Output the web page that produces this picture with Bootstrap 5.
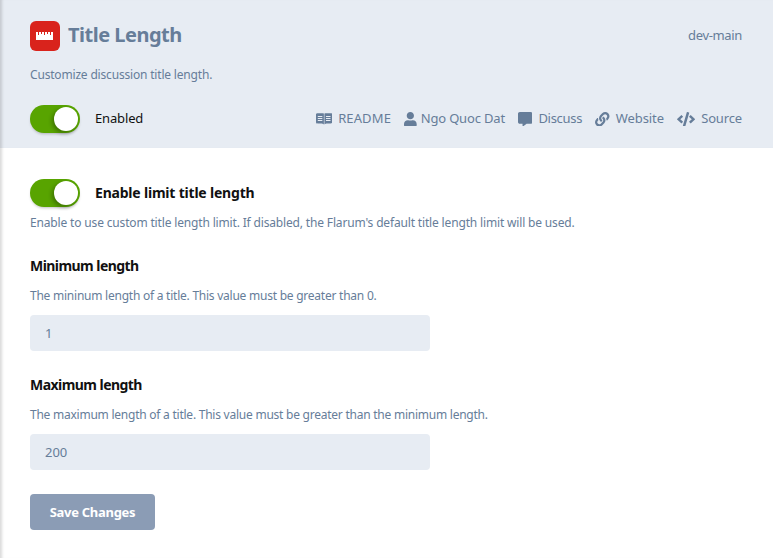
<!DOCTYPE html>
<html lang="en">
<head>
    <meta charset="UTF-8">
    <title>Title Length</title>
    <link href="https://cdn.jsdelivr.net/npm/bootstrap@5.3.0/dist/css/bootstrap.min.css" rel="stylesheet">
    <style>
        body {
            font-family: "Noto Sans", "Open Sans", sans-serif;
            font-size: 13px;
            color: #111;
            background: #fff;
            box-shadow: inset 4px 0 3px -2px rgba(0, 0, 0, .15);
            min-height: 558px;
        }
        .ext-head {
            background: #e7ecf3;
            height: 148px;
            padding: 21px 31px 0 30px;
            box-shadow: inset 4px 0 3px -2px rgba(0, 0, 0, .15);
        }
        .ext-icon {
            width: 30px;
            height: 30px;
            border-radius: 6px;
            background: #d9231c;
        }
        .ext-title {
            font-size: 20px;
            font-weight: 700;
            color: #667d99;
            margin: 0 0 0 8px;
            line-height: 28px;
            padding-bottom: 2px;
            letter-spacing: -.5px;
        }
        .ext-version { font-size: 13px; color: #667d99; letter-spacing: -.35px; }
        .ext-desc { font-size: 12px; color: #667d99; margin: 16px 0 0; line-height: 16px; letter-spacing: -.18px; }
        .muted-help { font-size: 12px; color: #667d99; line-height: 16px; margin: 0; letter-spacing: -.16px; }
        .muted-help.tight-help { letter-spacing: -.24px; }
        .toggle-sw {
            width: 50px;
            height: 28px;
            border-radius: 14px;
            background: #58a400;
            padding: 2px;
            box-shadow: 0 2px 3px -1px rgba(0, 0, 0, .25);
            flex: none;
        }
        .toggle-knob {
            width: 24px;
            height: 24px;
            border-radius: 50%;
            background: #fff;
            margin-left: auto;
            box-shadow: -2px 2px 4px rgba(0, 0, 0, .3);
        }
        .enabled-lbl { margin-left: 15px; letter-spacing: -.15px; }
        .ext-links { gap: 13px; color: #667d99; font-size: 13px; }
        .ext-links svg { fill: #667d99; height: 14.5px; display: block; margin-right: 6px; }
        .ext-links span { display: flex; align-items: center; }
        .ext-links .lnk-readme { letter-spacing: .12px; }
        .ext-links .lnk-author { letter-spacing: -.17px; }
        .ext-links .lnk-discuss { letter-spacing: -.3px; }
        .ext-links .lnk-site { letter-spacing: -.05px; }
        .ext-links .lnk-src { letter-spacing: -.15px; }
        .set-body { padding: 31px 31px 0 30px; }
        .set-label { font-size: 14px; font-weight: 700; color: #111; line-height: 20px; margin: 0; letter-spacing: -.55px; }
        .set-label.wide-lbl { margin-left: 15px; letter-spacing: -.2px; }
        .num-input.form-control {
            width: 400px;
            height: 36px;
            background: #e7ecf3;
            border: 0;
            border-radius: 4px;
            font-size: 13px;
            color: #667d99;
            padding: 8px 15px;
            box-shadow: none;
        }
        .save-btn.btn {
            width: 125px;
            height: 36px;
            background: #8b9cb5;
            border: 0;
            border-radius: 4px;
            color: #fff;
            font-size: 13px;
            font-weight: 700;
            padding: 1px 0 0;
            letter-spacing: -.28px;
        }
    </style>
</head>
<body>
<div class="ext-head">
    <div class="d-flex align-items-center">
        <div class="ext-icon d-flex align-items-center justify-content-center">
            <svg width="18" height="8" viewBox="0 0 18 8"><path fill="#fff" d="M0 0h2v3h1V0h2v2h1V0h2v3h1V0h2v2h1V0h2v3h1V0h2v8H0z"/></svg>
        </div>
        <h1 class="ext-title">Title Length</h1>
        <span class="ext-version ms-auto">dev-main</span>
    </div>
    <p class="ext-desc">Customize discussion title length.</p>
    <div class="d-flex align-items-center" style="margin-top:22px">
        <div class="toggle-sw"><div class="toggle-knob"></div></div>
        <span class="enabled-lbl">Enabled</span>
        <div class="ext-links d-flex ms-auto">
            <span class="lnk-readme"><svg viewBox="0 0 576 512"><path fill-rule="evenodd" d="M60 40h200c10 0 18 8 18 18v380c-30-30-60-34-100-34H60c-33 0-60-10-60-40V80c0-25 27-40 60-40zm256 0h200c33 0 60 15 60 40v284c0 30-27 40-60 40H398c-40 0-70 4-100 34V58c0-10 8-18 18-18zM64 140v34h160v-34zm0 70v34h160v-34zm288-70v34h160v-34zm0 70v34h160v-34zm0 70v34h160v-34zM64 280v34h160v-34z"/></svg>README</span>
            <span class="lnk-author"><svg viewBox="0 0 448 512" style="margin-right:4px"><path d="M224 256c70.700 0 128-57.300 128-128S294.700 0 224 0 96 57.300 96 128s57.300 128 128 128zm89.600 32h-16.700c-22.200 10.200-46.900 16-72.900 16s-50.600-5.800-72.900-16h-16.700C60.200 288 0 348.200 0 422.400V464c0 26.500 21.500 48 48 48h352c26.500 0 48-21.500 48-48v-41.600c0-74.200-60.200-134.400-134.400-134.400z"/></svg>Ngo Quoc Dat</span>
            <span class="lnk-discuss"><svg viewBox="0 0 512 512"><path d="M448 0H64C28.700 0 0 28.700 0 64v288c0 35.300 28.700 64 64 64h96v84c0 9.800 11.200 15.500 19.100 9.700L304 416h144c35.300 0 64-28.700 64-64V64c0-35.300-28.700-64-64-64z"/></svg>Discuss</span>
            <span class="lnk-site"><svg viewBox="0 0 512 512"><path d="M326.612 185.391c59.747 59.809 58.927 155.698.36 214.59-.11.12-.24.25-.36.37l-67.2 67.2c-59.27 59.27-155.699 59.262-214.96 0-59.27-59.26-59.27-155.7 0-214.96l37.106-37.106c9.84-9.84 26.786-3.3 27.294 10.606.648 17.722 3.826 35.527 9.69 52.721 1.986 5.822.567 12.262-3.783 16.612l-13.087 13.087c-28.026 28.026-28.905 73.66-1.155 101.96 28.024 28.579 74.086 28.749 102.325.51l67.2-67.19c28.191-28.191 28.073-73.757 0-101.83-3.701-3.694-7.429-6.564-10.341-8.569a16.037 16.037 0 0 1-6.947-12.606c-.396-10.567 3.348-21.456 11.698-29.806l21.054-21.055c5.521-5.521 14.182-6.199 20.584-1.731a152.482 152.482 0 0 1 20.522 17.197zM467.547 44.449c-59.261-59.262-155.69-59.27-214.96 0l-67.2 67.2c-.12.12-.25.25-.36.37-58.566 58.892-59.387 154.781.36 214.59a152.454 152.454 0 0 0 20.521 17.196c6.402 4.468 15.064 3.789 20.584-1.731l21.054-21.055c8.35-8.35 12.094-19.239 11.698-29.806a16.037 16.037 0 0 0-6.947-12.606c-2.912-2.005-6.64-4.875-10.341-8.569-28.073-28.073-28.191-73.639 0-101.83l67.2-67.19c28.239-28.239 74.3-28.069 102.325.51 27.75 28.3 26.872 73.934-1.155 101.96l-13.087 13.087c-4.35 4.35-5.769 10.79-3.783 16.612 5.864 17.194 9.042 34.999 9.69 52.721.509 13.906 17.454 20.446 27.294 10.606l37.106-37.106c59.271-59.259 59.271-155.699.001-214.959z"/></svg>Website</span>
            <span class="lnk-src"><svg viewBox="0 0 640 512"><path d="M278.900 511.500l-61-17.700c-6.400-1.800-10-8.500-8.200-14.900L346.200 8.700c1.800-6.400 8.500-10 14.900-8.200l61 17.700c6.400 1.800 10 8.500 8.200 14.900L293.800 503.300c-1.900 6.400-8.500 10.100-14.900 8.200zm-114-112.200l43.500-46.400c4.600-4.900 4.300-12.700-.8-17.200L117 256l90.600-79.700c5.100-4.500 5.500-12.300.8-17.200l-43.500-46.400c-4.500-4.800-12.100-5.100-17-.5L3.800 247.200c-5.100 4.700-5.100 12.800 0 17.500l144.100 135.100c4.900 4.600 12.500 4.400 17-.5zm327.200.6l144.100-135.100c5.100-4.700 5.100-12.800 0-17.500L492.100 112.100c-4.800-4.500-12.400-4.300-17 .5L431.600 159c-4.600 4.900-4.300 12.700.8 17.200L523 256l-90.600 79.700c-5.100 4.500-5.500 12.300-.8 17.200l43.500 46.400c4.500 4.900 12.100 5.100 17 .6z"/></svg>Source</span>
        </div>
    </div>
</div>
<div class="set-body">
    <div class="d-flex align-items-center">
        <div class="toggle-sw"><div class="toggle-knob"></div></div>
        <h3 class="set-label wide-lbl">Enable limit title length</h3>
    </div>
    <p class="muted-help" style="margin-top:8px">Enable to use custom title length limit. If disabled, the Flarum's default title length limit will be used.</p>
    <h3 class="set-label" style="margin-top:25px">Minimum length</h3>
    <p class="muted-help tight-help" style="margin-top:12px">The mininum length of a title. This value must be greater than 0.</p>
    <input type="number" class="form-control num-input" value="1" style="margin-top:11px">
    <h3 class="set-label" style="margin-top:24px">Maximum length</h3>
    <p class="muted-help tight-help" style="margin-top:12px">The maximum length of a title. This value must be greater than the minimum length.</p>
    <input type="number" class="form-control num-input" value="200" style="margin-top:11px">
    <button type="button" class="btn save-btn" style="margin-top:24px">Save Changes</button>
</div>
</body>
</html>
